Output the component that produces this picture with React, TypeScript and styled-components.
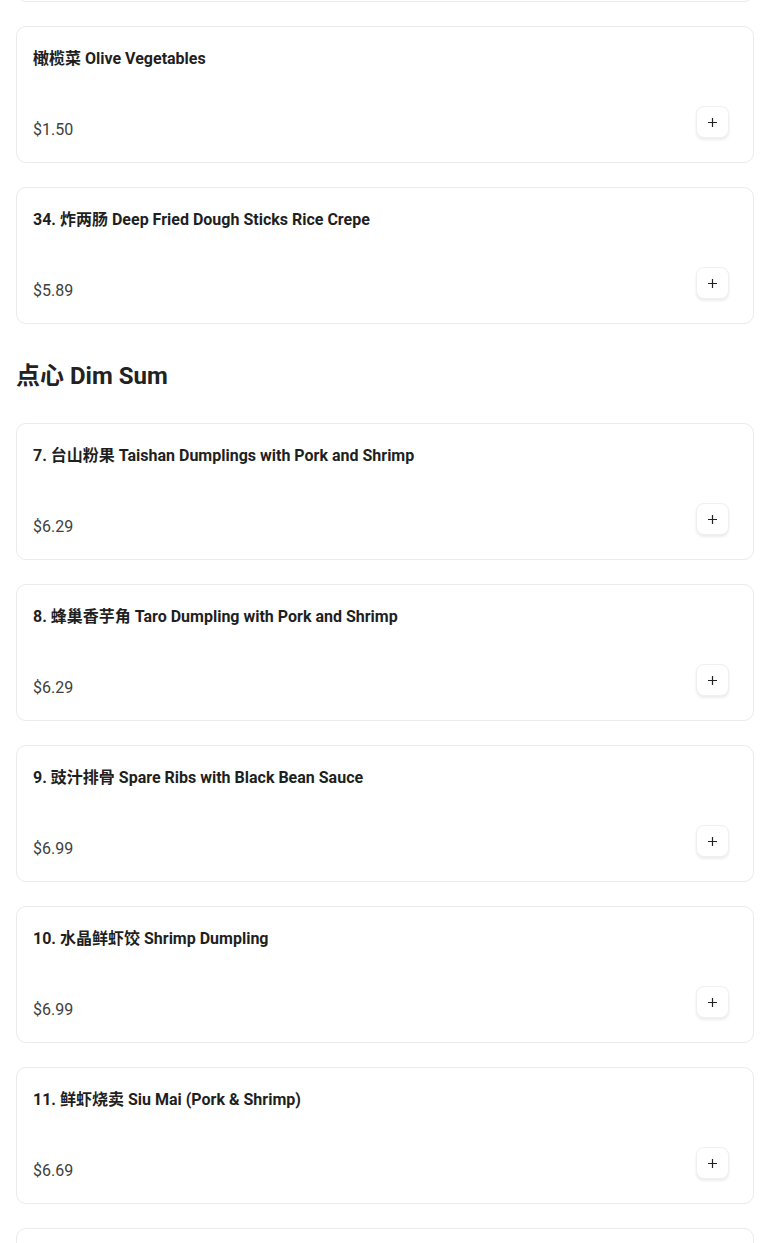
import React from "react";
import styled, { createGlobalStyle } from "styled-components";

interface IItem {
  name: string;
  price: string;
}

interface ISection {
  title?: string;
  items: IItem[];
}

const GlobalStyle = createGlobalStyle`
  html, body {
    margin: 0;
    padding: 0;
    background: #ffffff;
    overflow: hidden;
  }
  body {
    font-family: Roboto, "Noto Sans CJK SC", "Liberation Sans", sans-serif;
    color: #1f1f1f;
    -webkit-font-smoothing: antialiased;
  }
`;

const Page = styled.main`
  height: 1243px;
  overflow: hidden;
  padding: 0 16px;
`;

// the menu is scrolled: the previous card only shows its bottom edge
const Scroller = styled.div`
  margin-top: -135px;
  display: flex;
  flex-direction: column;
`;

const Section = styled.section`
  display: flex;
  flex-direction: column;
`;

const SectionTitle = styled.h2`
  margin: 36px 0 31px;
  font-size: 24px;
  line-height: 32px;
  font-weight: 700;
  color: #222222;
`;

const CardList = styled.ul`
  list-style: none;
  margin: 0;
  padding: 0;
  display: flex;
  flex-direction: column;
  gap: 24px;
`;

const Card = styled.li`
  box-sizing: border-box;
  height: 137px;
  border: 1px solid #ebebeb;
  border-radius: 10px;
  background: #ffffff;
  padding: 20px 16px 20px;
  display: flex;
  flex-direction: column;
  justify-content: space-between;
`;

const ItemName = styled.div`
  font-size: 16px;
  line-height: 24px;
  font-weight: 700;
  color: #1f1f1f;
`;

const Row = styled.div`
  display: flex;
  align-items: flex-end;
  justify-content: space-between;
`;

const Price = styled.span`
  font-size: 16px;
  line-height: 24px;
  font-weight: 400;
  color: #404040;
`;

const AddButton = styled.button`
  box-sizing: border-box;
  width: 33px;
  height: 32px;
  margin: 0 8px 4px 0;
  border: 1px solid #f0f0f0;
  border-radius: 8px;
  background: #ffffff;
  box-shadow: 0 2px 3px rgba(0, 0, 0, 0.08);
  display: flex;
  align-items: center;
  justify-content: center;
  padding: 0;
  cursor: pointer;
  color: #222222;
`;

const PlusIcon = () => (
  <svg width="11" height="11" viewBox="0 0 11 11" fill="none">
    <path d="M5.5 1v9M1 5.5h9" stroke="currentColor" strokeWidth="1.2" />
  </svg>
);

const sections: ISection[] = [
  {
    items: [
      { name: "33. 斋肠粉 Plain Rice Crepe", price: "$4.99" },
      { name: "橄榄菜 Olive Vegetables", price: "$1.50" },
      { name: "34. 炸两肠 Deep Fried Dough Sticks Rice Crepe", price: "$5.89" },
    ],
  },
  {
    title: "点心 Dim Sum",
    items: [
      { name: "7. 台山粉果 Taishan Dumplings with Pork and Shrimp", price: "$6.29" },
      { name: "8. 蜂巢香芋角 Taro Dumpling with Pork and Shrimp", price: "$6.29" },
      { name: "9. 豉汁排骨 Spare Ribs with Black Bean Sauce", price: "$6.99" },
      { name: "10. 水晶鲜虾饺 Shrimp Dumpling", price: "$6.99" },
      { name: "11. 鲜虾烧卖 Siu Mai (Pork & Shrimp)", price: "$6.69" },
      { name: "12. 蚝油叉烧包 BBQ Pork Bun", price: "$6.29" },
    ],
  },
];

const MenuCard = ({ name, price }: IItem) => (
  <Card>
    <ItemName>{name}</ItemName>
    <Row>
      <Price>{price}</Price>
      <AddButton aria-label={`Add ${name}`}>
        <PlusIcon />
      </AddButton>
    </Row>
  </Card>
);

export default function App() {
  return (
    <>
      <GlobalStyle />
      <Page>
        <Scroller>
          {sections.map((section, i) => (
            <Section key={i}>
              {section.title && <SectionTitle>{section.title}</SectionTitle>}
              <CardList>
                {section.items.map((item) => (
                  <MenuCard key={item.name} {...item} />
                ))}
              </CardList>
            </Section>
          ))}
        </Scroller>
      </Page>
    </>
  );
}
